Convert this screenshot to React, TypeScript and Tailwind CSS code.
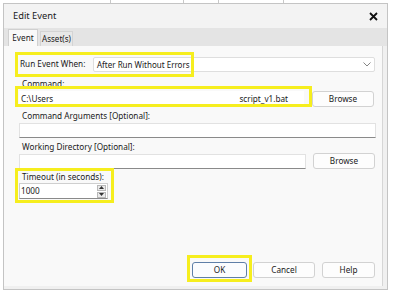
import React from 'react';

const font = { fontFamily: '"Noto Sans", "Open Sans", Arial, sans-serif' };

const Btn: React.FC<{ label: string; w: string; primary?: boolean }> = ({ label, w, primary }) => (
  <div
    className={`${w} h-[16px] flex items-center justify-center rounded-[3px] border text-[8.2px] text-[#1a1a1a] ${
      primary ? 'border-[#5f7fa8] bg-[#fbfcfe]' : 'border-[#d2d2d2] bg-[#fdfdfd]'
    }`}
  >
    {label}
  </div>
);

const Field: React.FC<{ w: string; children?: React.ReactNode }> = ({ w, children }) => (
  <div className={`${w} h-[15px] bg-white border border-[#e2e2e2] border-b-[#8a8a8a] flex items-center px-[2px] text-[8.2px] text-[#1a1a1a]`}>
    {children}
  </div>
);

const Label: React.FC<{ children: React.ReactNode }> = ({ children }) => (
  <div className="h-[12px] pl-[3px] flex items-center text-[8.2px] text-[#1a1a1a]">{children}</div>
);

export default function App() {
  return (
    <div className="w-[393px] h-[296px] bg-white relative overflow-hidden" style={font}>
      {/* background app lines peeking out */}
      <div className="absolute left-[110px] top-0 w-px h-[3px] bg-[#c8c8c8]" />
      <div className="absolute left-[183px] top-0 w-px h-[3px] bg-[#c8c8c8]" />
      <div className="absolute left-[218px] top-0 w-px h-[3px] bg-[#c8c8c8]" />
      <div className="absolute left-[283px] top-0 w-px h-[3px] bg-[#c8c8c8]" />

      <div className="absolute left-[3px] top-[3px] w-[385px] h-[287px] border border-[#c4c4c4] bg-[#f0f0f0] flex flex-col">
        {/* title bar */}
        <div className="h-[24px] bg-[#f3f3f3] flex items-center justify-between pl-[9px] pr-[9px]">
          <span className="text-[9.3px] text-[#1a1a1a]">Edit Event</span>
          <svg width="9" height="9" viewBox="0 0 9 9">
            <path d="M1 1 L8 8 M8 1 L1 8" stroke="#111" strokeWidth="1.8" />
          </svg>
        </div>

        {/* tab strip */}
        <div className="h-[18px] bg-[#e4e4e4] flex items-end pl-[4px] gap-[2px]">
          <div className="h-[17px] w-[30px] bg-[#f9f9f9] border border-b-0 border-[#d0d0d0] flex items-center justify-center text-[8.2px] text-[#1a1a1a]">
            Event
          </div>
          <div className="h-[15px] w-[33px] bg-[#e8e8e8] border border-b-0 border-[#d4d4d4] flex items-center justify-center text-[8px] text-[#1a1a1a]">
            Asset(s)
          </div>
        </div>

        {/* tab page */}
        <div className="relative flex-1 bg-[#f9f9f9] border-r border-[#d6d6d6] mr-[4px] mb-[3px] pl-[15px] pr-[7px] pt-[11px] flex flex-col">
          {/* yellow highlights */}
          <div className="absolute left-[11px] top-[6px] w-[179px] h-[25px] border-[3px] border-[#f6ee1e]" />
          <div className="absolute left-[11px] top-[40px] w-[297px] h-[21px] border-[3px] border-[#f6ee1e]" />
          <div className="absolute left-[11px] top-[122px] w-[99px] h-[35px] border-[3px] border-[#f6ee1e]" />
          <div className="absolute left-[183px] top-[209px] w-[65px] h-[27px] border-[3px] border-[#f6ee1e]" />

          {/* run event when */}
          <div className="flex items-center h-[15px]">
            <span className="w-[74px] pl-[1px] text-[8.2px] text-[#1a1a1a]">Run Event When:</span>
            <div className="flex-1 h-[15px] bg-white border border-[#dedede] rounded-[2px] flex items-center justify-between px-[3px] text-[8px] text-[#1a1a1a]">
              <span>After Run Without Errors</span>
              <svg width="8" height="5" viewBox="0 0 8 5">
                <path d="M0.5 0.5 L4 4 L7.5 0.5" stroke="#777" strokeWidth="0.9" fill="none" />
              </svg>
            </div>
          </div>

          <div className="mt-[6px]">
            <Label>Command:</Label>
          </div>
          <div className="flex items-center gap-[8px] mt-[1px]">
            <div className="w-[285px] h-[16px] bg-white flex items-center justify-between pl-[2px] pr-[16px] text-[8.2px] text-[#1a1a1a]">
              <span>C:\Users</span>
              <span>script_v1.bat</span>
            </div>
            <Btn label="Browse" w="w-[62px]" />
          </div>

          <div className="mt-[3px]">
            <Label>Command Arguments [Optional]:</Label>
          </div>
          <div className="mt-[1px]">
            <Field w="w-[357px]" />
          </div>

          <div className="mt-[3px]">
            <Label>Working Directory [Optional]:</Label>
          </div>
          <div className="flex items-end gap-[7px]">
            <Field w="w-[287px]" />
            <Btn label="Browse" w="w-[62px]" />
          </div>

          <div className="mt-[2px]">
            <Label>Timeout (in seconds):</Label>
          </div>
          <div className="w-[89px] h-[16px] bg-white border border-[#cfcfcf] border-b-[#8a8a8a] flex items-center justify-between pl-[1px] pr-[1px] text-[8.2px] text-[#1a1a1a]">
            <span>1000</span>
            <div className="w-[9px] h-[13px] flex flex-col gap-px">
              <div className="h-[6px] bg-[#eaeaea] border border-[#b8b8b8] flex items-center justify-center">
                <svg width="5" height="3" viewBox="0 0 5 3"><path d="M0 3 L2.5 0 L5 3 Z" fill="#333" /></svg>
              </div>
              <div className="h-[6px] bg-[#eaeaea] border border-[#b8b8b8] flex items-center justify-center">
                <svg width="5" height="3" viewBox="0 0 5 3"><path d="M0 0 L2.5 3 L5 0 Z" fill="#333" /></svg>
              </div>
            </div>
          </div>

          {/* bottom buttons */}
          <div className="mt-auto mb-[8px] flex justify-end gap-[6px]">
            <Btn label="OK" w="w-[55px]" primary />
            <Btn label="Cancel" w="w-[62px]" />
            <div className="pl-[1px]">
              <Btn label="Help" w="w-[53px]" />
            </div>
          </div>
        </div>
      </div>
    </div>
  );
}
